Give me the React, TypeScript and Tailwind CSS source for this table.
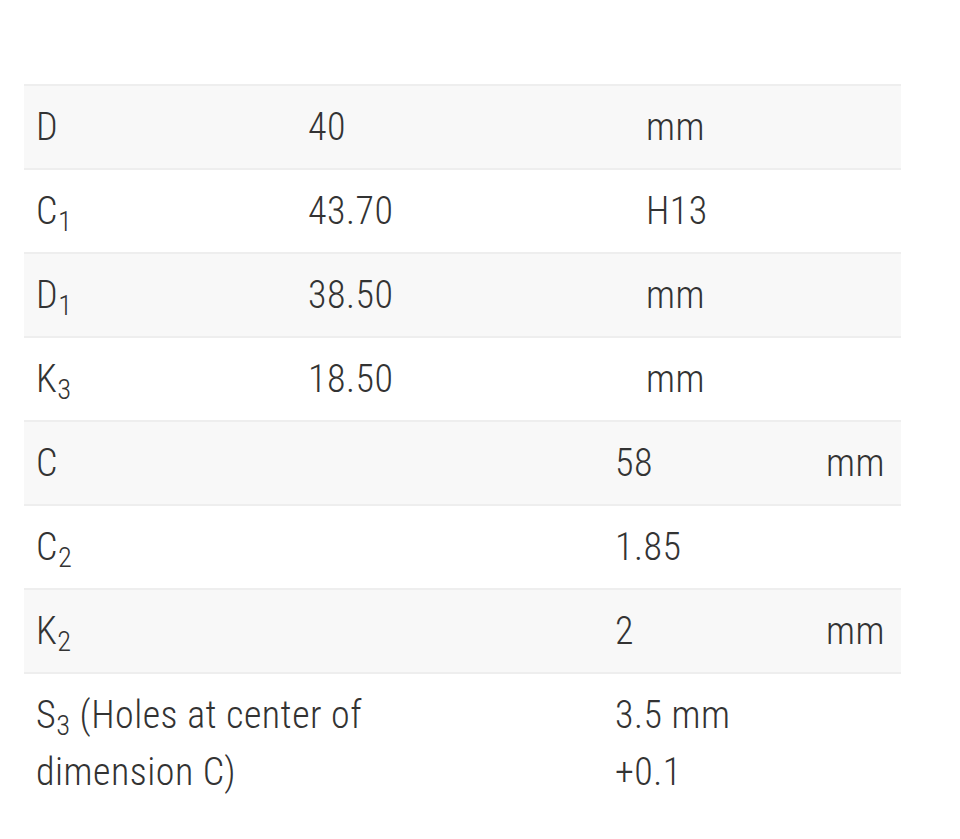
import React from 'react';

type Cell = { main: string; sub?: string; rest?: string };
type Row = Cell[];

const top: Row[] = [
  [{ main: 'D' }, { main: '40' }, { main: 'mm' }],
  [{ main: 'C', sub: '1' }, { main: '43.70' }, { main: 'H13' }],
  [{ main: 'D', sub: '1' }, { main: '38.50' }, { main: 'mm' }],
  [{ main: 'K', sub: '3' }, { main: '18.50' }, { main: 'mm' }],
];

const bottom: Row[] = [
  [{ main: 'C' }, { main: '58' }, { main: 'mm' }],
  [{ main: 'C', sub: '2' }, { main: '1.85' }, { main: '' }],
  [{ main: 'K', sub: '2' }, { main: '2' }, { main: 'mm' }],
  [
    { main: 'S', sub: '3', rest: ' (Holes at center of dimension C)' },
    { main: '3.5 mm\n+0.1' },
    { main: '' },
  ],
];

function CellText({ cell }: { cell: Cell }) {
  return (
    <div className="px-3 py-[12.5px]">
      <div className="max-w-[420px] whitespace-pre-line">
        {cell.main}
        {cell.sub && <sub>{cell.sub}</sub>}
        {cell.rest}
      </div>
    </div>
  );
}

function SpecTable({ rows, cols }: { rows: Row[]; cols: string }) {
  return (
    <div>
      {rows.map((row, i) => (
        <div
          key={i}
          className={`grid ${cols} border-t-2 border-[#eeeeee] ${i % 2 === 0 ? 'bg-[#f8f8f8]' : 'bg-white'}`}
        >
          {row.map((c, j) => (
            <CellText key={j} cell={c} />
          ))}
        </div>
      ))}
    </div>
  );
}

export default function App() {
  return (
    <div
      className="min-h-[839px] bg-white pt-[84px] pl-[24px] text-[38px] leading-[57px] font-light tracking-[0.5px] text-[#333333]"
      style={{ fontFamily: '"Roboto Condensed", Roboto, "Liberation Sans", sans-serif', fontStretch: '87.5%' }}
    >
      <div className="w-[877px]">
        <SpecTable rows={top} cols="grid-cols-[272px_338px_267px]" />
        <SpecTable rows={bottom} cols="grid-cols-[579px_211px_87px]" />
      </div>
    </div>
  );
}
